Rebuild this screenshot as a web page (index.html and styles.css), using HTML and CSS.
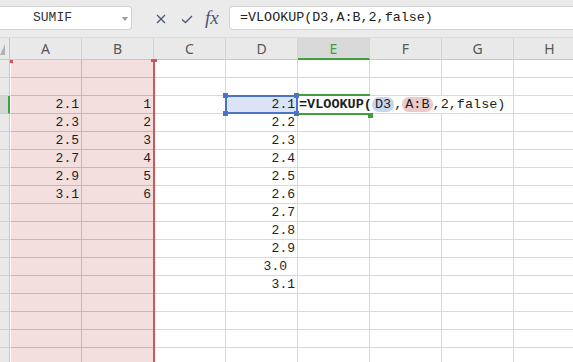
FILE: index.html
```html
<!DOCTYPE html>
<html lang="en">
 <head>
 <meta charset="UTF-8">
 <title>VLOOKUP</title>
 <link rel="stylesheet" href="styles.css">
 </head>
 <body>
 <div class="bar">
  <div class="namebox">SUMIF<i class="caret"></i></div>
  <svg class="ic-x" width="10" height="10" viewBox="0 0 10 10"><path d="M1 1L9 9M9 1L1 9" stroke="#4b5670" stroke-width="1.3" fill="none"/></svg>
  <svg class="ic-ok" width="12" height="9" viewBox="0 0 12 9"><path d="M1 4.5L4.5 7.5L11 1" stroke="#4b5670" stroke-width="1.3" fill="none"/></svg>
  <span class="fx">fx</span>
  <div class="formula">=VLOOKUP(D3,A:B,2,false)</div>
 </div>
 <div class="sheet" id="sheet">
  <div class="range"></div>
  <div class="range-h left"></div>
  <div class="range-h right"></div>
 </div>
 <script src="app.js"></script>
 </body>
</html>
```

FILE: styles.css
```css
* {
margin: 0;
padding: 0;
box-sizing: border-box;
}

html,
body {
width: 100%;
height: 100%;
overflow: hidden;
background: #fff;
}

body {
font-family: "Liberation Mono", monospace;
font-size: 13px;
color: #1e1e1e;
}

/* formula bar */
.bar {
height: 38px;
background: #ebebeb;
border-bottom: 1px solid #dcdcdc;
display: flex;
align-items: flex-start;
padding-top: 6px;
}

.namebox {
position: relative;
width: 132px;
height: 24px;
background: #fff;
border: 1px solid #d2d2d2;
border-left: none;
border-radius: 0 4px 4px 0;
line-height: 22px;
padding-left: 33px;
color: #333;
}

.caret {
position: absolute;
right: 3px;
top: 10px;
border-top: 4px solid #9a9a9a;
border-left: 3px solid transparent;
border-right: 3px solid transparent;
}

.ic-x {
margin: 8px 0 0 24px;
}

.ic-ok {
margin: 9px 0 0 15px;
}

.fx {
margin: 1px 0 0 12px;
width: 17px;
font-family: "Liberation Serif", serif;
font-style: italic;
font-size: 19px;
line-height: 22px;
color: #4b5670;
}

.formula {
flex: 1;
margin-left: 7px;
height: 24px;
background: #fff;
border: 1px solid #d2d2d2;
border-right: none;
border-radius: 4px 0 0 4px;
padding-left: 10px;
line-height: 22px;
font-size: 13.4px;
color: #222;
white-space: nowrap;
}

/* grid */
.sheet {
position: relative;
display: grid;
grid-template-columns: 10px repeat(8, 72px);
grid-template-rows: 22px;
grid-auto-rows: 18px;
}

.corner {
position: relative;
background: #e9e9e9;
border-right: 1px solid #c6c6c6;
border-bottom: 1px solid #c8c8c8;
}

.corner::after {
content: "";
position: absolute;
left: 0;
top: 6px;
width: 5px;
height: 11px;
background: #b2b2b2;
clip-path: polygon(100% 0, 100% 100%, 0 100%);
}

.ch {
background: #e9e9e9;
border-right: 1px solid #d4d4d4;
border-bottom: 1px solid #c8c8c8;
font-family: "Noto Sans", sans-serif;
font-size: 14px;
line-height: 21px;
text-align: center;
color: #575757;
}

.ch.on {
background: #d9d9d9;
color: #3f9f3f;
border-bottom: 2px solid #3f9f3f;
}

.rh {
background: #e9e9e9;
border-right: 1px solid #c6c6c6;
border-bottom: 1px solid #cfcfcf;
}

.rh.on {
background: #d5d5d5;
border-right: 2px solid #3f9f3f;
}

.c {
border-right: 1px solid #d9d9d9;
border-bottom: 1px solid #d9d9d9;
text-align: right;
padding-right: 2px;
line-height: 17px;
white-space: nowrap;
overflow: hidden;
}

.c.pk {
background: #f4dfdf;
border-color: #cbb6b6;
}

.c.first {
border-left: 1px solid #fff;
}

.c.txt {
padding-right: 10px;
}

/* A:B reference range */
.range {
position: absolute;
left: 153px;
top: 22px;
bottom: 0;
width: 2px;
background: #cf5757;
}

.range-h {
position: absolute;
top: 22px;
height: 3px;
background: #cf5757;
}

.range-h.left {
left: 10px;
width: 3px;
}

.range-h.right {
left: 151px;
top: 21px;
width: 6px;
}

/* active cell D3 */
.cur {
position: relative;
overflow: visible;
background: #dbe3f5;
}

.cur::before {
content: "";
position: absolute;
left: -1px;
top: -1px;
right: -1px;
bottom: -1px;
border: 2px solid #4a74c8;
}

.hd {
position: absolute;
width: 5px;
height: 5px;
background: #4a74c8;
}

.hd.tl { left: -3px; top: -3px; }
.hd.tr { left: 68px; top: -3px; }
.hd.bl { left: -3px; top: 15px; }
.hd.br { left: 68px; top: 15px; }

/* in-cell editor E3 */
.edit {
position: relative;
overflow: visible;
z-index: 2;
text-align: left;
padding-left: 1px;
border-right-color: transparent;
}

.edit::before,
.edit::after {
content: "";
position: absolute;
left: 0;
width: 72px;
height: 2px;
background: #3f9f3f;
}

.edit::before {
top: -2px;
}

.edit::after {
bottom: -2px;
}

.edit .eh {
position: absolute;
right: -4px;
bottom: -5px;
width: 5px;
height: 5px;
background: #3f9f3f;
}

.etext {
display: inline-block;
background: #fff;
font-size: 13.5px;
padding-right: 4px;
}

.etext b {
font-weight: bold;
}

.ref1,
.ref2 {
padding: 0 3px;
border-radius: 7px;
}

.ref1 {
background: #c9d6f0;
}

.ref2 {
background: #edcaca;
}
```

FILE: app.js
```js
var sheet = document.getElementById('sheet');
var cols = ['A', 'B', 'C', 'D', 'E', 'F', 'G', 'H'];
var colA = { 3: '2.1', 4: '2.3', 5: '2.5', 6: '2.7', 7: '2.9', 8: '3.1' };
var colB = { 3: '1', 4: '2', 5: '3', 6: '4', 7: '5', 8: '6' };
var colD = { 3: '2.1', 4: '2.2', 5: '2.3', 6: '2.4', 7: '2.5', 8: '2.6',
  9: '2.7', 10: '2.8', 11: '2.9', 12: '3.0', 13: '3.1' };

function cell(cls, text) {
  var d = document.createElement('div');
  d.className = cls;
  if (text) d.textContent = text;
  sheet.appendChild(d);
  return d;
}

cell('corner');
for (var i = 0; i < cols.length; i++) {
  cell(cols[i] == 'E' ? 'ch on' : 'ch', cols[i]);
}

for (var r = 1; r <= 17; r++) {
  cell(r == 3 ? 'rh on' : 'rh');
  cell('c pk first', colA[r]);
  cell('c pk', colB[r]);
  cell('c');

  if (r == 3) {
    var cur = cell('c cur', colD[r]);
    cur.innerHTML += '<i class="hd tl"></i><i class="hd tr"></i><i class="hd bl"></i><i class="hd br"></i>';
    var ed = cell('c edit');
    ed.innerHTML = '<span class="etext"><b>=VLOOKUP(</b><span class="ref1">D3</span>,<span class="ref2">A:B</span>,2,false)</span><i class="eh"></i>';
  } else {
    cell(r == 12 ? 'c txt' : 'c', colD[r]);
    cell('c');
  }

  cell('c');
  cell('c');
  cell('c');
}
```
